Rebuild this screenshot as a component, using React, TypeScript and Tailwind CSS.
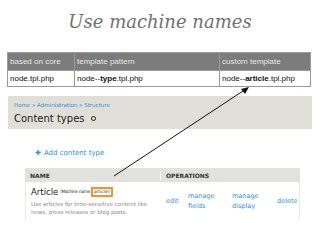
export default function App() {
  return (
    <div className="relative w-[320px] h-[240px] overflow-hidden bg-white">
      <h1 className="h-[52px] pt-[8px] text-center font-['DejaVu_Serif',serif] text-[18px] italic text-[#717171]">
        Use machine names
      </h1>

      <table className="mx-[7px] w-[304px] border-collapse font-['Liberation_Sans',Arial,sans-serif] text-[8px]">
        <thead>
          <tr className="h-[18px] bg-[#7c7c7c] text-[#e6e6e6]">
            <th className="w-[67px] border border-[#9a9a9a] px-[2px] text-left font-normal">based on core</th>
            <th className="w-[145px] border border-[#9a9a9a] px-[2px] text-left font-normal">template pattern</th>
            <th className="border border-[#9a9a9a] px-[2px] text-left font-normal">custom template</th>
          </tr>
        </thead>
        <tbody>
          <tr className="h-[16px] text-[#111]">
            <td className="border border-[#9a9a9a] px-[2px]">node.tpl.php</td>
            <td className="border border-[#9a9a9a] px-[2px]">
              node--<b>type</b>.tpl.php
            </td>
            <td className="border border-[#9a9a9a] px-[2px]">
              node--<b>article</b>.tpl.php
            </td>
          </tr>
        </tbody>
      </table>

      <div className="mx-[8px] mt-[9px] h-[33px] bg-[#dfdfd8] px-[6px] pt-[5px] font-['DejaVu_Sans',sans-serif]">
        <div className="text-[5.5px] leading-[8px] text-[#2f8fd5]">
          Home » Administration » Structure
        </div>
        <div className="mt-[3px] flex items-center gap-[6px] text-[10px] leading-[13px] text-[#222]">
          Content types
          <span className="inline-block h-[5px] w-[5px] rounded-full border-[1.5px] border-[#222]" />
        </div>
      </div>

      <div className="mt-[20px] pl-[35px] font-['DejaVu_Sans',sans-serif] text-[7px] leading-[9px] text-[#2f8fd5]">
        <span className="mr-[3px]">✚</span>Add content type
      </div>

      <div className="mx-[25px] mt-[10px] w-[275px] font-['DejaVu_Sans',sans-serif]">
        <div className="flex h-[14px] items-center bg-[#e1e2dc] text-[6px] font-bold text-[#333]">
          <div className="w-[135px] pl-[5px]">NAME</div>
          <div className="border-l border-white pl-[5px]">OPERATIONS</div>
        </div>
        <div className="flex h-[38px] border-x border-[#e8e8e8]">
          <div className="w-[135px] pl-[5px] pt-[5px]">
            <div className="flex items-center text-[8.5px] leading-[10px] text-[#222]">
              Article
              <span className="ml-[2px] text-[4.5px] tracking-[-0.4px] text-[#333]">(Machine name:</span>
              <span className="flex h-[10px] items-center border-2 border-solid border-[#f7931e] px-[1px] text-[4.5px] text-[#333]">
                article)
              </span>
            </div>
            <div className="mt-[3px] text-[5.5px] leading-[8px] text-[#8a8a8a]">
              Use articles for time-sensitive content like news, press releases or blog posts.
            </div>
          </div>
          <div className="flex flex-1 items-center text-[6.5px] leading-[10px] text-[#2f8fd5]">
            <div className="w-[27px] pl-[5px]">edit</div>
            <div className="w-[44px]">manage<br />fields</div>
            <div className="w-[45px]">manage<br />display</div>
            <div>delete</div>
          </div>
        </div>
      </div>

      <svg className="absolute left-0 top-0" width="320" height="240" viewBox="0 0 320 240">
        <line x1="114" y1="176" x2="246" y2="89" stroke="#111" strokeWidth="1" />
        <polygon points="249,87 241,89 245,94" fill="#111" />
      </svg>
    </div>
  );
}
